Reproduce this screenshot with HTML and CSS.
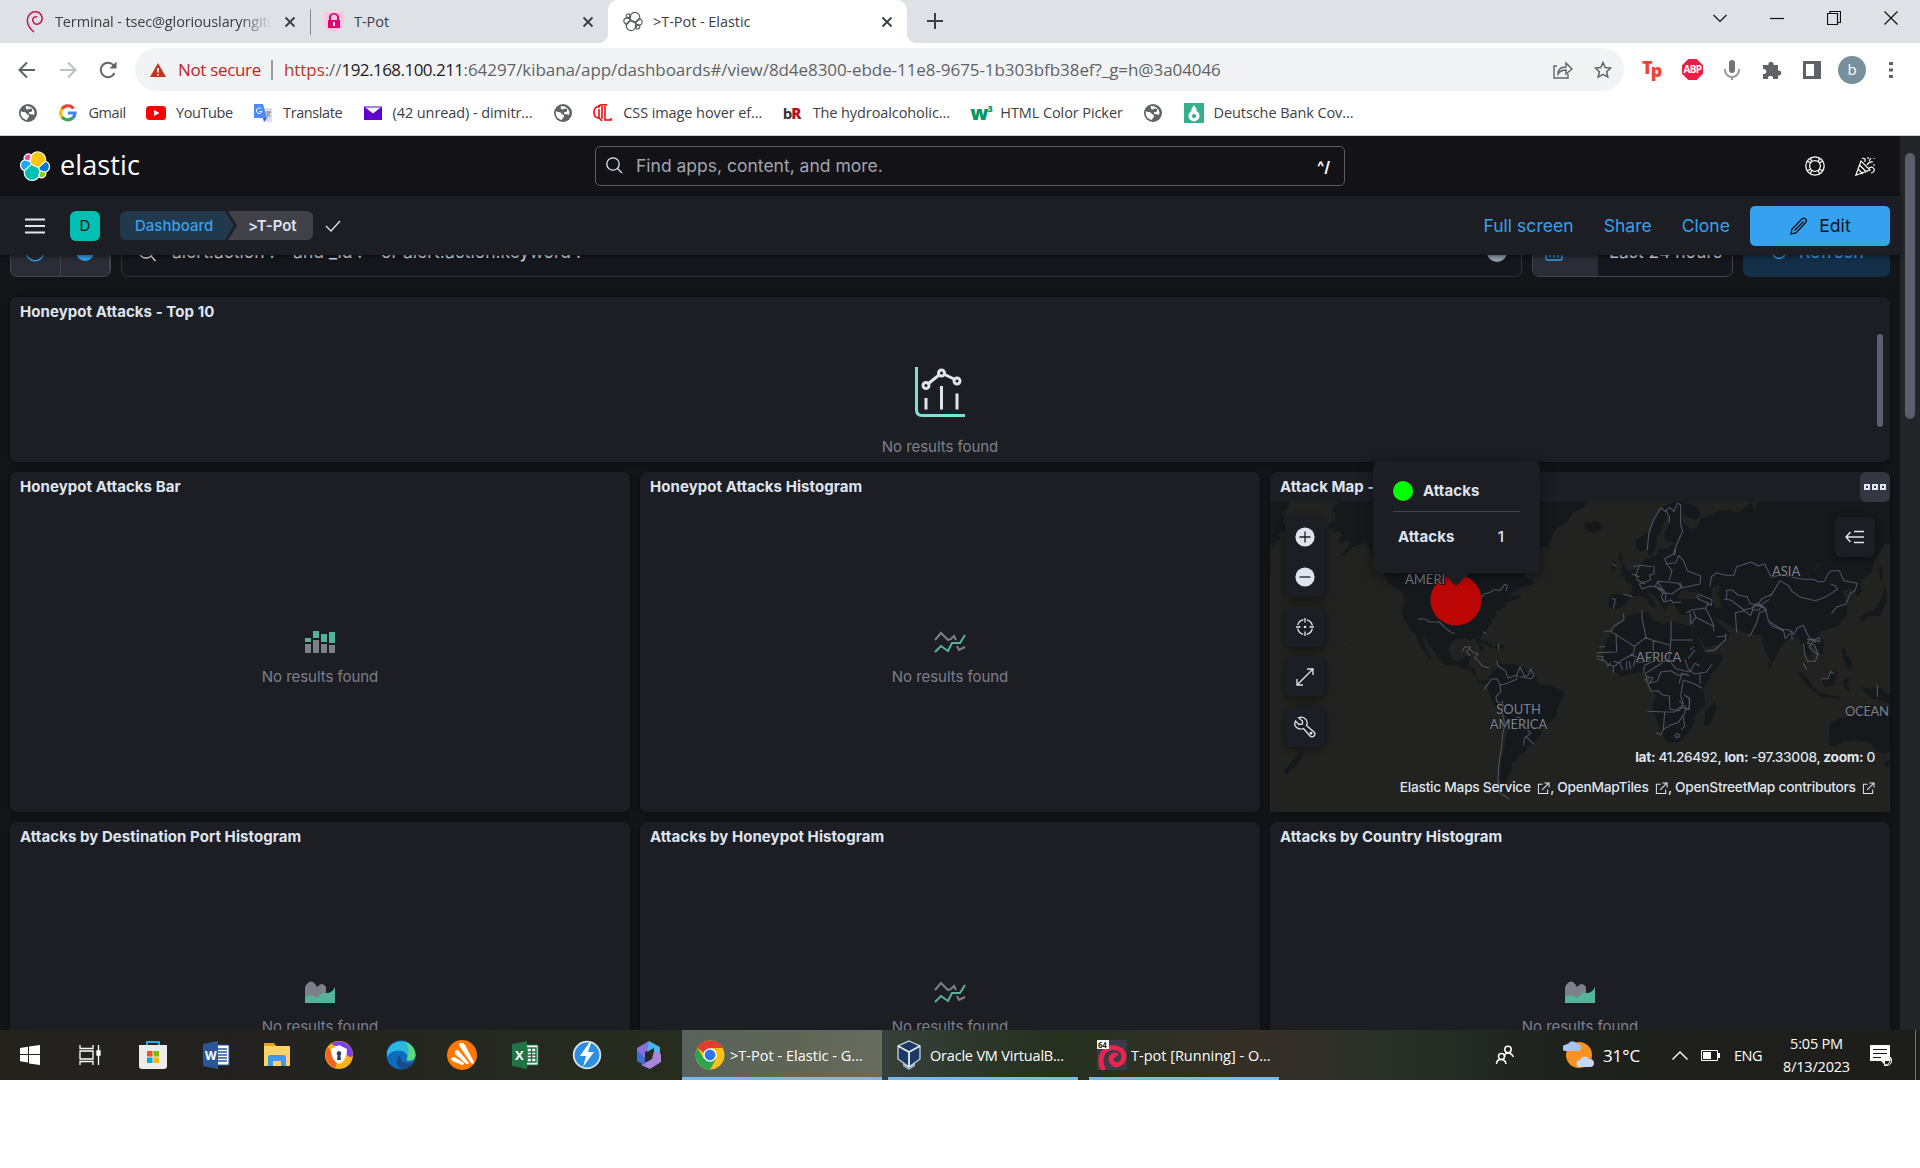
FILE: index.html
```html
<!DOCTYPE html>
<html lang="en">
<head>
<meta charset="utf-8">
<title>&gt;T-Pot - Elastic</title>
<link rel="stylesheet" href="styles.css">
</head>
<body>
<svg class="defs" width="0" height="0" aria-hidden="true">
  <defs>
    <g id="cluster">
      <path d="M12.58 13.787l7.002 3.211 7.066-6.213a7.849 7.849 0 00.152-1.557c0-4.287-3.462-7.776-7.717-7.776a7.682 7.682 0 00-6.357 3.377l-1.176 6.12 1.03 2.838z" class="c-y"/>
      <path d="M5.333 21.228A7.964 7.964 0 005.18 22.8c0 4.297 3.491 7.793 7.784 7.793a7.773 7.773 0 006.425-3.397l1.165-6.115-1.555-2.985-7.036-3.2-6.63 6.332z" class="c-t"/>
      <path d="M5.29 9.053l4.799 1.137 1.051-5.49a3.794 3.794 0 00-5.85 4.353z" class="c-p"/>
      <path d="M4.873 10.2C2.73 10.911 1.23 12.977 1.23 15.246a5.32 5.32 0 003.41 4.962l6.733-6.119-1.236-2.652-5.264-1.237z" class="c-b"/>
      <path d="M20.873 27.198a3.757 3.757 0 002.289.786c2.09 0 3.79-1.7 3.79-3.79 0-.459-.08-.903-.238-1.321l-4.794-1.122-1.047 5.447z" class="c-g"/>
      <path d="M21.848 20.563l5.28 1.235c2.143-.708 3.643-2.775 3.643-5.044a5.306 5.306 0 00-3.418-4.952l-6.905 6.053 1.4 2.708z" class="c-d"/>
    </g>
    <symbol id="globe" viewBox="0 0 20 20"><circle cx="10" cy="10" r="9" fill="#5f6368"/><path d="M3 8c2 2 4 0 5 2s3 1 3 3-2 2-2 4C4 16 2 12 3 8zM8 3c-1 3 1 4 3 3s4 0 3 2-3 0-3 2 4 1 5 2c2-4-2-9-8-9z" fill="#fff"/></symbol>
    <symbol id="close" viewBox="0 0 12 12"><path d="M1.5 1.5l9 9m0-9l-9 9" stroke="#3c4043" stroke-width="1.9"/></symbol>
    <symbol id="bars" viewBox="0 0 32 22"><path d="M1 13h6v9H1zM9 9h6v13H9zM17 13h6v9h-6zM25 14h6v8h-6z" fill="#7d7f8a"/><path d="M1 7h6v4H1zM9 0h6v7H9zM17 3h6v8h-6zM25 1h6v11h-6z" fill="#54b399"/></symbol>
    <symbol id="lines" viewBox="0 0 32 22"><path d="M1 9l6-7 7 7 3-1 3-3 2 4M23 15l2 4 6-3" fill="none" stroke="#7d7f8a" stroke-width="2"/><path d="M1 21l6-6 7 5 4-8h8l5-8" fill="none" stroke="#54b399" stroke-width="2"/></symbol>
    <symbol id="area" viewBox="0 0 30 22"><path d="M0 21V6q6-11 12 0 5-6 9 0v10L0 21z" fill="#7d7f8a"/><path d="M0 22v-6q6-4 12 1l5-5h5q5 0 8-6v16z" fill="#54b399"/></symbol>
    <symbol id="ext" viewBox="0 0 14 14"><path d="M6 2.5H1.500v10h10V8M8 1h5v5M13 1L5.500 8.500" fill="none" stroke="currentColor" stroke-width="1.100"/></symbol>
  </defs>
</svg>

<header class="tabs">
  <div class="tab tab-1">
    <svg width="20" height="24" viewBox="0 0 20 24"><path d="M9 22C4 18 1 13 3 7 6 0 15 0 17 7c1 6-5 9-8 6-3-4 0-7 3-6" fill="none" stroke="#c4174f" stroke-width="1.500"/></svg>
    <span class="tab-name faded">Terminal - tsec@gloriouslaryngiti</span>
    <svg class="x" width="12" height="12"><use href="#close"/></svg>
  </div>
  <div class="tab tab-2">
    <svg width="20" height="20" viewBox="0 0 20 20"><path d="M0 0h20v10a10 10 0 01-20 0z" fill="#f9c9df"/><path d="M5 8V5a5 4 0 0110 0v3h1v8H4V8zM7 8h6V5.500a3 3 0 00-6 0z" fill="#e20074" fill-rule="evenodd"/><path d="M9 10h2v4H9z" fill="#fff"/></svg>
    <span class="tab-name">T-Pot</span>
    <svg class="x" width="12" height="12"><use href="#close"/></svg>
  </div>
  <div class="tab tab-3">
    <svg class="outline" width="20" height="21" viewBox="0 0 32 32"><use href="#cluster"/></svg>
    <span class="tab-name">&gt;T-Pot - Elastic</span>
    <svg class="x" width="12" height="12"><use href="#close"/></svg>
  </div>
  <svg class="plus" width="16" height="16" viewBox="0 0 16 16"><path d="M8 0v16M0 8h16" stroke="#3c4043" stroke-width="2"/></svg>
  <div class="wincontrols">
    <svg width="14" height="14" viewBox="0 0 14 14"><path d="M.5 4L7 10.500 13.500 4"/></svg>
    <svg width="14" height="14" viewBox="0 0 14 14"><path d="M0 7.500h14"/></svg>
    <svg width="14" height="14" viewBox="0 0 14 14"><path d="M.5 2.500h10v11H.5zM3 2.500v-2h10.500v11h-3"/></svg>
    <svg width="14" height="14" viewBox="0 0 14 14"><path d="M.5.500l13 13m0-13l-13 13"/></svg>
  </div>
</header>

<div class="toolbar">
  <div class="nav">
    <svg width="18" height="18" viewBox="0 0 18 18"><path d="M17 9H2m7-7.500L1.500 9 9 16.500" stroke="#5f6368"/></svg>
    <svg width="18" height="18" viewBox="0 0 18 18"><path d="M1 9h15M9 1.500L16.500 9 9 16.500" stroke="#bdc1c6"/></svg>
    <svg width="18" height="18" viewBox="0 0 18 18"><path d="M15.500 12A7.200 7.200 0 1115 5" stroke="#5f6368"/><path d="M17.500.5v7h-7z" fill="#5f6368" stroke="none"/></svg>
  </div>
  <div class="omnibox">
    <svg width="16" height="14" viewBox="0 0 16 14"><path d="M8 0l8 14H0z" fill="#c5341f"/><path d="M8 5v4.500M8 11v1.500" stroke="#fff" stroke-width="1.600"/></svg>
    <span class="notsecure">Not secure</span>
    <i class="omnisep"></i>
    <span class="url"><span class="scheme">https</span>://<span class="host">192.168.100.211</span>:64297/kibana/app/dashboards#/view/8d4e8300-ebde-11e8-9675-1b303bfb38ef?_g=h@3a04046</span>
    <svg class="share" width="20" height="18" viewBox="0 0 20 18"><path d="M4 5H1v12h14v-4M5 13c0-5 3-7 8-7V2l6 6-6 5V9c-4 0-6 1-8 4z" fill="none" stroke="#5f6368" stroke-width="1.400"/></svg>
    <svg width="18" height="18" viewBox="0 0 18 18"><path d="M9 1.500l2.200 5 5.400.5-4 3.700 1.200 5.400L9 13.300l-4.800 2.800 1.200-5.400-4-3.700 5.400-.5z" fill="none" stroke="#5f6368" stroke-width="1.500"/></svg>
  </div>
  <div class="exts">
    <span class="tp">T<b>p</b></span>
    <span class="abp">ABP</span>
    <svg width="20" height="20" viewBox="0 0 20 20"><rect x="7" width="6" height="13" rx="3" fill="#757575"/><path d="M3 9v1a7 7 0 0014 0V9M10 17v3" fill="none" stroke="#9a9a9a" stroke-width="2"/></svg>
    <svg width="20" height="20" viewBox="0 0 20 20"><path d="M1 5h5.500a2.600 2.600 0 115 0H16v5.500a2.600 2.600 0 110 5V19h-5a2.600 2.600 0 10-5 0H1v-5a2.600 2.600 0 100-5z" fill="#5f6368"/></svg>
    <svg width="20" height="20" viewBox="0 0 20 20"><path d="M1 1h18v18H1zM4 4v12h8V4z" fill="#5f6368" fill-rule="evenodd"/></svg>
    <span class="avatar">b</span>
    <svg width="4" height="18" viewBox="0 0 4 18"><path d="M0 1h4v3H0zM0 7.500h4v3H0zM0 14h4v3H0z" fill="#5f6368"/></svg>
  </div>
</div>

<nav class="bookmarks">
  <span class="bm"><svg width="20" height="20"><use href="#globe"/></svg></span>
  <span class="bm tight"><svg width="20" height="20" viewBox="0 0 20 20" fill="none" stroke-width="3.200"><path d="M15.500 5.500A7 7 0 004 6" stroke="#ea4335"/><path d="M4 6a7 7 0 000 8" stroke="#fbbc05"/><path d="M4 14a7 7 0 0010.500 1" stroke="#34a853"/><path d="M14.500 15.200A7 7 0 0017 10h-7" stroke="#4285f4"/></svg>Gmail</span>
  <span class="bm tight"><svg width="20" height="20" viewBox="0 0 20 20"><rect y="3" width="20" height="14" rx="3.500" fill="#f00"/><path d="M8 7l5.500 3L8 13z" fill="#fff"/></svg>YouTube</span>
  <span class="bm tight"><svg width="20" height="20" viewBox="0 0 20 20"><path d="M8 5h11v14h-8z" fill="#dcdfe3"/><path d="M1 1h9l4 14H1z" fill="#4c8bf5"/><path d="M10 15h4l-3 4z" fill="#3367d6"/><path d="M8.500 6A2.800 2.800 0 109 8.500H6.500" fill="none" stroke="#fff"/><path d="M13 9h5m-1 0l-3.500 5m0-4l4 4" fill="none" stroke="#778"/></svg>Translate</span>
  <span class="bm"><svg width="20" height="20" viewBox="0 0 20 20"><path d="M1 4h18v13H1z" fill="#6001d2"/><path d="M1 4h18l-9 7z" fill="#fff" stroke="#6001d2"/></svg>(42 unread) - dimitr...</span>
  <span class="bm"><svg width="20" height="20"><use href="#globe"/></svg></span>
  <span class="bm"><svg width="20" height="20" viewBox="0 0 20 20" fill="none" stroke="#f00000" stroke-width="1.500"><path d="M7 4Q1 3 1 9t5 6M5 3q4-2 9-1M9 3v13m3-13v14h6v-2M6 6v9l3 3"/></svg>CSS image hover ef...</span>
  <span class="bm"><span class="br">b<b>R</b></span>The hydroalcoholic...</span>
  <span class="bm"><span class="w3">w<sup>3</sup></span>HTML Color Picker</span>
  <span class="bm"><svg width="20" height="20"><use href="#globe"/></svg></span>
  <span class="bm"><svg width="20" height="20" viewBox="0 0 20 20"><path d="M0 0h20v20H0z" fill="#34b18a"/><path d="M10 2l2.500 4v2a5.500 5.500 0 11-5 0V6z" fill="#fff"/><circle cx="10" cy="13" r="2" fill="#34a37f"/></svg>Deutsche Bank Cov...</span>
</nav>

<div class="viewport">
<main class="kibana">
  <div class="global">
    <svg class="mark" width="30" height="30" viewBox="0 0 32 32"><g stroke="#fff" stroke-width="2.600"><use href="#cluster"/></g><use href="#cluster"/></svg>
    <span class="wordmark">elastic</span>
    <div class="find">
      <svg width="17" height="17" viewBox="0 0 17 17" fill="none" stroke="#dfe5ef" stroke-width="1.300"><circle cx="7" cy="7" r="6.200"/><path d="M11.500 11.500L16 16"/></svg>
      <span>Find apps, content, and more.</span><b>^/</b>
    </div>
    <svg class="help" width="20" height="20" viewBox="0 0 20 20" fill="none" stroke="#fff" stroke-width="1.250"><circle cx="10" cy="10" r="9.200"/><circle cx="10" cy="10" r="5.400"/><path d="M2.300 5.500l3.500 1.200M5.500 2.300l1.200 3.500M17.700 5.500l-3.500 1.200M14.500 2.300l-1.200 3.500M2.300 14.500l3.500-1.200M5.500 17.700l1.200-3.500M17.700 14.500l-3.500-1.200M14.500 17.700l-1.200-3.500"/></svg>
    <svg class="cheer" width="20" height="20" viewBox="0 0 20 20" fill="none" stroke="#fff" stroke-width="1.200"><path d="M6 5L.800 19.200 15 14zM4.500 9l7 7M3 13l5 5M7 2l3 1v3M12 9q2-4 6-3M14 12q4-2 5 1t-3 4M13 1v2m3-1l-2 3m5-3v1m-1 6h2"/></svg>
  </div>
  <div class="appbar">
    <svg class="menu" width="20" height="16" viewBox="0 0 20 16"><path d="M0 1.500h20M0 8h20M0 14.500h20" stroke="#dfe5ef" stroke-width="2.200"/></svg>
    <span class="space">D</span>
    <span class="crumb crumb-1">Dashboard</span><span class="crumb crumb-2">&gt;T-Pot</span>
    <svg class="check" width="16" height="12" viewBox="0 0 16 12"><path d="M1 6l5 5L15 1" fill="none" stroke="#dfe5ef" stroke-width="1.300"/></svg>
    <div class="actions"><a>Full screen</a><a>Share</a><a>Clone</a>
      <button class="edit"><svg width="18" height="18" viewBox="0 0 18 18" fill="none" stroke="#0b1118" stroke-width="1.300"><path d="M1 17l1-5L12.500 1.500q1.500-1 3 .5t.5 3L6 16zM4.500 13.500l9-9"/></svg>Edit</button>
    </div>
  </div>

  <div class="filters">
    <div class="fbtns"><span><svg width="20" height="20" viewBox="0 0 20 20"><circle cx="10" cy="10" r="8.800" fill="none" stroke="#36a2ef" stroke-width="1.300"/><path d="M10 5v8" stroke="#36a2ef"/></svg></span><span><svg width="20" height="20" viewBox="0 0 20 20"><circle cx="10" cy="10" r="9" fill="#36a2ef"/></svg></span></div>
    <div class="query"><svg width="20" height="20" viewBox="0 0 20 20" fill="none" stroke="#dfe5ef" stroke-width="1.300"><circle cx="9" cy="9" r="7"/><path d="M14 14l4.500 5"/></svg><span>alert.action :*&nbsp; and _id :*&nbsp; or alert.action.keyword :*</span><i></i></div>
    <div class="dates"><span class="cal"><svg width="18" height="18" viewBox="0 0 18 18" fill="none" stroke="#36a2ef" stroke-width="1.400"><rect x="1" y="2" width="16" height="15" rx="1.500"/><path d="M4 10h10M4 13h10" stroke-dasharray="2 2"/></svg></span><span class="when">Last 24 hours</span></div>
    <div class="refresh"><svg width="16" height="16" viewBox="0 0 16 16"><circle cx="8" cy="8" r="6.500" fill="none" stroke="#36a2ef" stroke-width="1.400"/></svg>Refresh</div>
  </div>

  <div class="grid">
    <section class="panel wide"><h2>Honeypot Attacks - Top 10</h2>
      <div class="empty big"><svg width="50" height="50" viewBox="0 0 50 50" fill="none"><path d="M1.500 0v43q0 5.500 5.500 5.500h43" stroke="#7de2d1" stroke-width="3"/><path d="M11 31v11.500M26.500 19v23.500M42 26.500v16M11 18.500L26.500 6 42 13.500" stroke="#dfe5ef" stroke-width="3"/><g fill="#1d1e24" stroke="#dfe5ef" stroke-width="3"><circle cx="11" cy="18.500" r="3"/><circle cx="26.500" cy="6" r="3"/><circle cx="42" cy="14" r="3"/></g></svg><p>No results found</p></div>
      <i class="scroll"></i>
    </section>
    <section class="panel mid"><h2>Honeypot Attacks Bar</h2><div class="empty"><svg width="32" height="22"><use href="#bars"/></svg><p>No results found</p></div></section>
    <section class="panel mid"><h2>Honeypot Attacks Histogram</h2><div class="empty"><svg width="32" height="22"><use href="#lines"/></svg><p>No results found</p></div></section>
    <section class="panel mid mapp"><h2>Attack Map -</h2>
      <span class="opts"><i></i><i></i><i></i></span>
      <div class="map">
        <svg class="world" width="620" height="310" viewBox="1270 502 620 310">
          <rect x="1270" y="502" width="620" height="310" fill="#222220"/>
          <g transform="translate(1260 450) scale(.33333)">
            <g class="land">
              <path d="M240 150l-28 30 15 10-2 22-18 10-2 10 20 4-8 12 22-4 8 12-15 18 15 8 15-10 12 6-20 26-26 26 30-18 16-18 22-8 16-8 14 10 10 30 20 20 30 60 42 30 5 18 0 20-8 15 5 25 14 20 6 15 16 10 10 25 12 20 12 20 8 14 5-6-10-22-12-20-6-22 12 4 10 20 16 22 12 14 4 14 22 12 30 0 12 8 22 4 18 18 12 22 22 6 12-8-12-8-16 6-14-14-2-24-20-4 2-20 6-12-16-2-10 12-22 2-12-10-6-18 4-22 18-16 28-2 12 8 12-8 14 14 4 20 8 10 4-12-12-26 8-12 12-14 8-18 10-4-4-12 16-14-2-12 16-6 16-10-6-10 26-8 28-10-14-6-26 4 22-16 26-14V150z"/>
              <path d="M840 150h150l-20 22-32 18-14 24-40 26-14 34-6 18-24-4zM975 215l14 6 14-8 22 8 2 16-26 12-26-10 6-8zM770 395l30-12 20 8-4 14-24 4-6-8zM30 150h58l-4 24-20 16 12 8-10 20 20 6-6 16-28 12 12 14-22 12-8 30-2 50h2V280l-14 4z"/>
              <path d="M710 628l14 14 45 2 20 6 12 14 28 16 2 24 38 2 42 16 3 14-22 32-3 32-24 22-16 8-8 28-26 26-16 2 2 18-24 12-6 16-16 6 2 20-12 18-6 32 18 22-20-4-18-34 6-60 10-50 8-60-8-30-30-24-20-42-4-26 10-28 24-22z"/>
              <path d="M112 895l6 14 14 2-22 34-30 28-12-2 26-36 22-22zM650 568l30 6 24 18-12 2-22-16-24-4zM705 586l26 0 4 10-28 2zM264 580l8 2-2 6zM42 745l4 4-2 4z"/>
            </g>
            <g class="edge"><path d="M474 507l24 1 10 8 30 0 16 16 20 16 10 1M660 445l12-12 18-6 12-8 18 2 14-18 8 4-4 16M606 605l8-14 18 0-12 14 10 12M628 596l12 12 14 2-10 14 12 10 10 14 22 6M710 632l4 16 22 14 8 22 28-10-2 14-28 12-22 6 2 20-14 14 2 14 20 10 10 14M772 672l8-22 14 30 12-6 6-18 10 22-8 8-36-6M672 718l22-30 16-2 12 20M728 752l-2 32 8 40-6 30-4 40-8 50-2 44 4 40 16 10 14 10M770 800l18 6 6 22 18 22-18 14-4 22M798 860l22 22M716 582v16M668 545l10 6"/></g>
          </g>
          <g transform="translate(1570 450) scale(.33333)">
            <g class="land">
              <path d="M315 155l-30 14-20 22-15 34-15 20-37 24-2 26 17 10 17-8 8 20 12-8 10-24-2-22 14-18 10-30 14-18 6 20-18 30 2 24 26 10-20 14-24 2-12 22-32 10-22 26-34 18-5 18 24 14-4 28-60 0-8 8 2 30 16 8 26-10 22-26 26-8 24 14 18 22 8 2-4-18-24-26 22 4 22 30 10 18 16-26 12 8 20 28 40 6 4 34-25-6-23-4-30-8-14 10-34-12-16-24-58 8-26 26-42 52-10 55 20 22 34 28 62-12 26 10-2 36 20 22-10 45 13 35 13 28 15 36 38-1 20-18 22-30 8-36 30-28-6-48 28-50 28-38 0-18-38 4-22-24-22-46 32 46 60-12 14-28-30-30-22-18 24 8 46 26 50 18 26 0 8 38 24 48 16-32 22-34 20-15 20 0 16 44 18 16 8 16-4-22-14-40 28 18 20 22 6-38-18-30 30-10 32-8 24-32 2-40-16-32 30-10 18 28 12-24-6-22 34-30 10-34 28-46 38-14V150H565l-12 36-4-30-44 30-54-6-28 16-32 10-8 26-20 6-26-24 0-20 42 16 14-16-8-22-40-14-14-4z"/>
              <path d="M148 305l10 14-6 12 18 30 8 14-30 6 8-14-6-10 8-12-12-16zM124 340l14-6 4 20-18 8zM44 215l14 6 14-8 22 8 2 16-26 12-26-10zM0 155h48l-20 24-28 10zM945 402l-8 40-22 34-30 14-18 18 12 6 14-14 40-4 18-52zM925 345l10 6 4 36-8 4zM435 755l4 20-19 52-18-2 3-40zM683 662l20 12 42 54-12-2-26-24zM732 728l28 4 50 8 0 6-48-4zM755 684l16 0 20-24 12 6-10 40-30 4zM816 594l12 4 0 18 14 12 4 34-14-8-14-34zM820 690l26-6-16 14 10 28-8-4-10-16zM868 706l22 10 40-2 30 22v26l-32-12-26-6zM780 815l54-16 22-20 16 4 12-18 24 2 6 20 18 12 12-36 16 34v106l-20 8-22-10-16-22-46-8-36 4-26 16-18-6 2-30zM945 934l14-2-2 18-12 0zM596 636l8 8 0 14-8-4z"/>
            </g>
            <g class="sea"><path d="M428 410l24-5-8 26 12 40-20 6-12-36zM322 446l8-22 20-6 10 10 16-2 26 20-36 2-22 0zM752 336l-14 24-6 2 14-24z"/></g>
            <g class="edge">
              <path d="M232 300l4-48 14-42 22-36 14 10 12-12 14 12 10-24 10 4 0 60 6 20-20 44-4 30M286 180l12 20v18M318 290l-8 22-26 14 6 16 28-4 8-22 14 16 12 30 40 16-2 24-38 8-16 4-10-14-32-4-30-2-8 14 22 20 28 4 10-8 20-12-6-14M290 342l16 20-8 30M252 346l0 26-14 4 4 14-34 12 8 14 26-8 20 4 20 12-8 16 8 16 20-6 8 8 24-2M208 350l-10 20 4 20 24 12M185 372l24 8M262 394l14 22 12 14-2 22M190 350l20-4 36 4M126 445l10 4-6 28M160 432l28 8M126 340l14 10M350 488l14-8 42-6 10-14-30-12-6-12M360 486l2 36 16-20-8-18M378 502l20 10 32 16 2 16M406 474l16 30 10 26M384 432l24 10 18 8-2 16-16-8M420 410l4-30 16-12 26 8 26 0 8-26 44-14 20 12 20-6 20 40 32-8 62 14 30 0 20 8 16-2 10-24 12-8 22 0 14 30 40 8-8 24-12 4-14 34-26 8-18 20M600 440l30-48 26 16 10 16 26 18 44 10 32-12 34-22-6-10-14-6M630 392l-24 40-30 14-12 16 22 16 10 36 40 24 20 2 16 12 10-18 18-8 8 18 10 20 20 14M470 448l0-28 16 0 20 16 26 4 8 20 28 8 30-20M462 448l20 2 40 30 24-6 14-14 14 6-6 14-22 0M500 548l-4-60 26-6 20 14 10-28 26 0 12 12-22 8-8 30-18 36-8 4M640 540l6 26 20-22 0 26M598 518l8 10 34 14M700 580l4 34 8 20 24 0 8-22-10-26-22-8 14-12 22 10 0-14-20 12-10 16 26 26M754 686l20 0 8-22 12 8M922 704v38M700 640l10 20M740 572l-30-4"/>
              <path d="M160 490l2 20-30 18-10 16-20 0M122 544l72 46-4 22-34 18-24 20M138 550l2 56-60 2M216 480l0 24 12 58-34 26M225 562l20 8 56 16 2-14V512M303 570h66M250 570l0 40-14 24-42 4M301 586l-4 44 20 26 42 10 16-26 14 8M300 624l-48 30-26 16 6 30 30-6 10-28 30-4 24 14 26-4M345 628l10 30 20 14 34-6 18-24M375 600l-20 26M360 600l12-10M390 672v30M230 680l20 4-16 20 10 20 20-2 12 12 22 4 2 40 28 4 12-22-8-22 8-48 34 12 22 12M328 700l6-30 24 8M232 784l56 2h26l16-14 28 6 0-34-16-8M284 786l-4 54-8 14-14-6M280 838l24-14 20-6 20-28 4-18-20-20M340 800l4 30-10 8M322 850l8 8-10 6-6-8zM348 738l12 10-4 30M356 780l-20-8M130 668v-20l-16-4-10-12-24-6M80 618l20 2-4 14M158 660l-8-20-20-6M170 660v-26M182 658l-4-24M190 650l6-24M200 620l-20-6M220 670l4-24 28-14M220 690l18 0M110 650l12-12M88 590l16 0M468 550l-2 20-32 30-30 4M440 560l30-2"/>
            </g>
          </g>
          <circle cx="1456" cy="600" r="25.500" fill="#bd0606"/>
          <g class="names"><text x="1405" y="584">AMERI</text><text x="1518.500" y="713.500" text-anchor="middle">SOUTH</text><text x="1518.500" y="728.500" text-anchor="middle">AMERICA</text><text x="1772" y="576">ASIA</text><text x="1636" y="662">AFRICA</text><text x="1845" y="715.500" textLength="44">OCEAN</text></g>
        </svg>
        <div class="tools">
          <div class="zoom"><svg width="20" height="20" viewBox="0 0 20 20"><circle cx="10" cy="10" r="9.600" fill="#dfe5ef"/><path d="M10 4.500v11M4.500 10h11" stroke="#1d1e24" stroke-width="1.300"/></svg><svg width="20" height="20" viewBox="0 0 20 20"><circle cx="10" cy="10" r="9.600" fill="#dfe5ef"/><path d="M4.500 10h11" stroke="#1d1e24" stroke-width="1.300"/></svg></div>
          <div><svg width="20" height="20" viewBox="0 0 20 20"><circle cx="10" cy="10" r="7.500" stroke-dasharray="8.200 3.580" stroke-dashoffset="-1.800"/><path d="M10 1v4.500M10 14.500V19M1 10h4.500M14.500 10H19"/><circle cx="10" cy="10" r="1.300" fill="#dfe5ef" stroke="none"/></svg></div>
          <div><svg width="20" height="20" viewBox="0 0 20 20"><path d="M2 18L18 2M12 2h6v6M2 12v6h6"/></svg></div>
          <div><svg width="22" height="22" viewBox="0 0 22 22"><path d="M4.500 1.800Q9 0 12 3.500q2 3 .5 6l7.500 6.500a2.800 2.800 0 01-4 4l-6.500-7.500q-4 1.500-7-1T1.500 5L5 8.500 8.500 8 8.500 5z"/><circle cx="17" cy="17.200" r=".8"/></svg></div>
        </div>
        <div class="legend"><svg width="20" height="14" viewBox="0 0 20 14" fill="none" stroke="#dfe5ef" stroke-width="1.400"><path d="M1 7h18M9 1.500h10M9 12.500h10M5.500 2L1 7l4.500 5"/></svg></div>
        <p class="coords"><b>lat:</b> 41.26492, <b>lon:</b> -97.33008, <b>zoom:</b> 0</p>
        <p class="credits">Elastic Maps Service <svg width="13" height="13"><use href="#ext"/></svg>, OpenMapTiles <svg width="13" height="13"><use href="#ext"/></svg>, OpenStreetMap contributors <svg width="13" height="13"><use href="#ext"/></svg></p>
      </div>
      <div class="tip"><div class="tip-head"><i></i>Attacks</div><div class="tip-row"><span>Attacks</span><span>1</span></div></div>
    </section>
    <section class="panel low"><h2>Attacks by Destination Port Histogram</h2><div class="empty"><svg width="30" height="22"><use href="#area"/></svg><p>No results found</p></div></section>
    <section class="panel low"><h2>Attacks by Honeypot Histogram</h2><div class="empty"><svg width="32" height="22"><use href="#lines"/></svg><p>No results found</p></div></section>
    <section class="panel low"><h2>Attacks by Country Histogram</h2><div class="empty"><svg width="30" height="22"><use href="#area"/></svg><p>No results found</p></div></section>
  </div>
</main>
<div class="track"><i></i></div>
</div>

<footer class="taskbar">
  <div class="pins">
    <svg width="22" height="22" viewBox="0 0 22 22"><path d="M1 4l8-1.200V10H1zM10 2.600L21 1v9H10zM1 11h8v7.500L1 17.300zM10 11h11v10l-11-1.600z" fill="#fff"/></svg>
    <svg width="22" height="22" viewBox="0 0 22 22" fill="none" stroke="#fff" stroke-width="1.300"><path d="M1 1v3.500h13V1M1 21v-3.500h13V21M1 7h13v8H1zM19.500 1v20"/><path d="M18 7h3v4h-3z" fill="#fff"/></svg>
    <svg width="30" height="30" viewBox="0 0 30 30"><path d="M9 6V2h12v4" fill="none" stroke="#29a9e8" stroke-width="2"/><path d="M1 5h28v21q0 3-3 3H4q-3 0-3-3z" fill="#ececec"/><path d="M9 11h5.500v5.500H9z" fill="#f25022"/><path d="M15.500 11H21v5.500h-5.500z" fill="#7fba00"/><path d="M9 17.500h5.500V23H9z" fill="#00a4ef"/><path d="M15.500 17.500H21V23h-5.500z" fill="#ffb900"/></svg>
    <svg width="30" height="30" viewBox="0 0 30 30"><path d="M14 5h14v20H14z" fill="#fff" stroke="#2b579a"/><path d="M17 9h9M17 12h9M17 15h9M17 18h9M17 21h9" stroke="#2b579a" stroke-width="1.500"/><path d="M2 4l15-3v28L2 26z" fill="#2b579a"/><text x="4" y="19.500" fill="#fff" font-size="12" font-weight="700">W</text></svg>
    <svg width="30" height="30" viewBox="0 0 30 30"><path d="M2 3h10l3 4h-13z" fill="#e3a21a"/><path d="M2 6h26v20H2z" fill="#fdd367"/><path d="M6 26v-9q0-2 2-2h14q2 0 2 2v9h-5v-5h-8v5z" fill="#3e9bdc"/></svg>
    <svg width="30" height="30" viewBox="0 0 30 30"><circle cx="15" cy="15" r="14" fill="#fbb216"/><path d="M7 4a14 14 0 0122 11q-2 4-6 0L15 7z" fill="#7b3ff2"/><path d="M4 7a14 14 0 007 21l2-6L7 12z" fill="#f26322"/><path d="M15 5l8 4q0 12-8 15-8-3-8-15z" fill="#fff"/><path d="M15 11a2.400 2.400 0 011.400 4.300L17 20h-4l.6-4.700A2.400 2.400 0 0115 11z" fill="#333a5a"/></svg>
    <svg width="30" height="30" viewBox="0 0 30 30"><circle cx="15" cy="15" r="14.500" fill="#0c6cbd"/><path d="M1 12A14.500 14.500 0 0129.500 15c0 4-4 7-9 5 2-4 0-8-5-9S4 11 1 17z" fill="#2bb7df"/><path d="M19 2a14 14 0 0110.500 13c0 4-4 7-9 5 3-6 3-13-1.500-18z" fill="#5bdc79"/><path d="M14 15c0 7 6 10 13 7-2 4-6 7-12 7-5-3-6-11-1-14z" fill="#1b4a8a"/></svg>
    <svg width="30" height="30" viewBox="0 0 30 30"><circle cx="15" cy="15" r="15" fill="#ff7800"/><path d="M13 3q3-1 5 2l9 17q0 3-3 1L13 7q-2-3 0-4zM8 11q2-2 4 0l10 12q-1 2-4 0L8 14zM4 18q3-2 5 0l8 5q0 2-2 2l-10-4z" fill="#fff"/></svg>
    <svg width="30" height="30" viewBox="0 0 30 30"><path d="M14 5h14v20H14z" fill="#fff" stroke="#217346"/><path d="M17 8h9v14h-9zM21.500 8v14M17 12h9M17 15h9M17 18h9" fill="none" stroke="#217346" stroke-width="1.500"/><path d="M2 4l15-3v28L2 26z" fill="#217346"/><text x="5" y="20" fill="#fff" font-size="13" font-weight="700">X</text></svg>
    <svg width="30" height="30" viewBox="0 0 30 30"><circle cx="15" cy="15" r="13.300" fill="#2c8fe0" stroke="#d7e3ee" stroke-width="1.800"/><path d="M17 3L8 16h6l-3 11 11-15h-6l3-9z" fill="#fff"/></svg>
    <svg width="30" height="30" viewBox="0 0 30 30"><path d="M15 1L3 8v13l8 4V12l9-5z" fill="#8a6fe0"/><path d="M15 1l11 6v10l-6-4V8l-7 4z" fill="#48b6e8"/><path d="M27 14v8l-11 7-9-4 11-6 2-8z" fill="#a985dc"/><path d="M3 10v11l8 4v-7z" fill="#3d6fd0"/></svg>
  </div>
  <div class="task active"><svg width="30" height="30" viewBox="0 0 30 30"><circle cx="15" cy="15" r="14.500" fill="#fbc116"/><path d="M2.400 8A14.500 14.500 0 0127.800 8H15v9z" fill="#e33b2e"/><path d="M2.400 8A14.500 14.500 0 0015 29.500L21 19l-12 0z" fill="#2da44e"/><circle cx="15" cy="15" r="6.800" fill="#fff"/><circle cx="15" cy="15" r="5.400" fill="#2b76e8"/></svg><span>&gt;T-Pot - Elastic - G...</span></div>
  <div class="task vb"><svg width="30" height="30" viewBox="0 0 30 30"><path d="M9 21h12v5l-6 4-6-4z" fill="#9fb0c6"/><path d="M15 1l11 5v13l-11 8L4 19V6z" fill="#1c3a63" stroke="#c9d6e6" stroke-width="1.300"/><path d="M4 6l11 6 11-6M15 12v15" fill="none" stroke="#e7eef6" stroke-width="1.800"/></svg><span>Oracle VM VirtualB...</span></div>
  <div class="task tpot"><svg width="30" height="30" viewBox="0 0 30 30"><path d="M0 0h30v30H0z" fill="#383b48"/><path d="M7 30Q2 23 5 15C9 5 25 5 27 16c0 9-11 12-13 4 0-5 4-6 6-4" fill="none" stroke="#f0234f" stroke-width="5"/><path d="M0 0h12v9H0z" fill="#fff"/><text x="1" y="7.500" font-size="8" font-weight="700" fill="#222">64</text></svg><span>T-pot [Running] - O...</span></div>
  <div class="tray">
    <svg class="people" width="20" height="20" viewBox="0 0 20 20" fill="none" stroke="#fff" stroke-width="1.500"><circle cx="13" cy="4.500" r="3.200"/><path d="M9.500 12q0-4 3.500-4t5.500 4"/><circle cx="6.500" cy="11.500" r="3"/><path d="M1.500 19q0-4.500 4.500-4.500t5 4.500"/></svg>
    <svg class="weather" width="32" height="30" viewBox="0 0 32 30"><circle cx="16" cy="15" r="13" fill="#f7931e"/><path d="M3 11a3 3 0 01-1-6q1-1 3-1a5 5 0 019 0q4 0 4 3.500T14 11z" fill="#a9c3f2"/><path d="M17 27a3.500 3.500 0 010-7 5 5 0 019-1q5 0 5 4t-4 4z" fill="#c5d7f7"/></svg>
    <span class="temp">31°C</span>
    <svg class="up" width="16" height="9" viewBox="0 0 16 9"><path d="M.5 8.500L8 1l7.500 7.500" fill="none" stroke="#fff" stroke-width="1.400"/></svg>
    <svg class="batt" width="19" height="11" viewBox="0 0 19 11"><path d="M.5.500h16v10H.5z" fill="none" stroke="#fff"/><path d="M2 2h8v7H2zM17 3h2v5h-2z" fill="#fff"/></svg>
    <span class="lang">ENG</span>
    <span class="clock">5:05 PM<br>8/13/2023</span>
    <svg class="note" width="22" height="21" viewBox="0 0 22 21"><path d="M0 0h20v16h-5v4l-4-4H0z" fill="#fff"/><path d="M3 4.500h14M3 8.500h14M3 12.500h8" stroke="#1d1d1a"/><path d="M14 20a5 5 0 005-9 5.500 5.500 0 01-5 9z" fill="#1d1d1a" stroke="#fff"/></svg>
    <i class="peek"></i>
  </div>
</footer>
</body>
</html>
```
FILE: styles.css
```css
* { box-sizing: border-box; }
body { margin: 0; width: 1920px; height: 1168px; overflow: hidden; background: #fff; font-family: "Open Sans", "Noto Sans", sans-serif; }
svg { flex: none; display: block; }
p, h2 { margin: 0; }
.defs { position: absolute; }
.c-y { fill: var(--mark, #fec514); } .c-t { fill: var(--mark, #00bfb3); } .c-p { fill: var(--mark, #f04e98); }
.c-b { fill: var(--mark, #1ba9f5); } .c-g { fill: var(--mark, #93c90e); } .c-d { fill: var(--mark, #0077cc); }
.outline { --mark: #fff; stroke: #55585c; stroke-width: 1.8; }

/* tab strip */
.tabs { display: flex; height: 43px; background: #dee1e6; font-size: 14.500px; color: #3c4043; }
.tab { display: flex; align-items: center; height: 43px; white-space: nowrap; }
.tab-name { margin-left: 10px; flex: 1; overflow: hidden; letter-spacing: -.05px; line-height: 24px; }
.tab-1 { width: 311px; padding: 0 15px 0 25px; position: relative; }
.tab-1::after { content: ""; position: absolute; right: 0; top: 9px; width: 1.500px; height: 26px; background: #85888d; }
.faded { margin-right: 12px; letter-spacing: -.14px; -webkit-mask-image: linear-gradient(90deg, #000 85%, transparent 100%); mask-image: linear-gradient(90deg, #000 85%, transparent 100%); }
.tab-2 { width: 297px; padding: 0 14px 0 13px; }
.tab-3 { width: 299px; padding: 0 14px 0 15px; background: #fff; border-radius: 10px 10px 0 0; position: relative; }
.tab-3::before, .tab-3::after { content: ""; position: absolute; bottom: 0; width: 10px; height: 10px; }
.tab-3::before { left: -10px; background: radial-gradient(circle at 0 0, transparent 10px, #fff 10.500px); }
.tab-3::after { right: -10px; background: radial-gradient(circle at 100% 0, transparent 10px, #fff 10.500px); }
.plus { margin: 13px 0 0 20px; }
.wincontrols { margin-left: auto; display: flex; gap: 43px; padding: 11px 22px 0 0; fill: none; stroke: #111; stroke-width: 1.200; }

/* address bar */
.toolbar { display: flex; align-items: center; height: 48px; padding-top: 5px; }
.nav { display: flex; gap: 22.500px; width: 135px; padding-left: 18px; fill: none; stroke-width: 2; }
.omnibox { display: flex; align-items: center; width: 1489px; height: 43px; border-radius: 22px; background: #f1f3f4; font-size: 17px; color: #5f6368; padding: 0 12px 0 15px; white-space: nowrap; line-height: 26px; }
.notsecure { color: #c5221f; margin-left: 12px; letter-spacing: -.330px; width: 83px; }
.omnisep { width: 2px; height: 20px; margin: 0 11px 0 10px; background: #9a9da1; }
.url { letter-spacing: -.070px; }
.scheme { color: #c5341f; }
.host { color: #202124; letter-spacing: -.530px; }
.share { margin: 0 21px 0 auto; }
.exts { display: flex; align-items: center; gap: 20px; flex: 1; padding-left: 18px; }
.tp { width: 20px; font: 800 18px/22px "Open Sans", sans-serif; color: #f44336; letter-spacing: -2px; margin-top: -5px; }
.tp b { position: relative; top: 3px; }
.abp { width: 21px; height: 21px; margin-right: -1px; background: #ed1e45; clip-path: polygon(30% 0, 70% 0, 100% 30%, 100% 70%, 70% 100%, 30% 100%, 0 70%, 0 30%); color: #fff; font: 700 10px/21px "Open Sans", sans-serif; text-align: center; letter-spacing: -.6px; }
.avatar { width: 28px; height: 28px; margin: 0 -1px 0 -4px; border-radius: 50%; background: #78909c; color: #fff; font-size: 15px; line-height: 27px; text-align: center; }
.exts svg:last-child { margin-left: 4px; }

.bookmarks { display: flex; align-items: center; gap: 20.400px; height: 45px; padding: 0 18px 1px; border-bottom: 1px solid #d0d3d8; font-size: 14.500px; letter-spacing: -.090px; color: #3c4043; white-space: nowrap; }
.bm { display: flex; align-items: center; gap: 10px; }
.tight { letter-spacing: -.420px; }
.br { width: 20px; font-weight: 700; font-size: 15px; letter-spacing: -1px; color: #333; }
.br b { color: #b3122c; }
.w3 { width: 20px; font-weight: 800; font-size: 20px; line-height: 20px; color: #059862; letter-spacing: -1px; white-space: nowrap; }
.w3 sup { font-size: 9px; line-height: 0; vertical-align: 8px; }

/* kibana */
.viewport { display: flex; height: 894px; overflow: hidden; font-family: Inter, sans-serif; color: #dfe5ef; }
.kibana { width: 1900px; background: #141519; }
.track { width: 20px; background: #242529; padding: 17px 5px 0; }
.track i { display: block; width: 10px; height: 266px; border-radius: 5px; background: #5c5f6b; }
.global { display: flex; align-items: center; height: 60px; padding: 0 25px 0 20px; background: #121217; position: relative; z-index: 2; }
.wordmark { width: 545px; padding-left: 10px; font: 400 27px/34px "Open Sans", sans-serif; letter-spacing: .1px; color: #fff; height: 37px; }
.find { display: flex; align-items: center; width: 750px; height: 40px; border: 1px solid #5a5c66; border-radius: 5px; padding: 0 14px 2px 10px; font-size: 17.500px; color: #a2a5ae; }
.find span { margin-left: 13px; flex: 1; }
.find b { font-size: 15px; color: #fff; padding-top: 2px; }
.help { margin-left: auto; }
.cheer { margin-left: 30px; }
.appbar { display: flex; align-items: center; height: 59px; padding: 0 10px 0 25px; background: #1d1e24; position: relative; z-index: 2; box-shadow: 0 1px 5px rgba(0,0,0,.6); }
.space { width: 30px; height: 30px; margin: 0 20px 0 25px; border-radius: 6px; background: #00bfb3; color: #111; font-size: 15px; line-height: 30px; text-align: center; }
.crumb { height: 29px; line-height: 29px; font-size: 15px; }
.crumb-1 { width: 114px; padding-left: 15px; font-weight: 500; color: #36a2ef; background: #22384d; border-radius: 6px 0 0 6px; clip-path: polygon(0 0, 105px 0, 100% 50%, 105px 100%, 0 100%); }
.crumb-2 { width: 85px; margin-left: -6px; padding-left: 20px; font-weight: 600; letter-spacing: -.05px; background: #404149; border-radius: 0 6px 6px 0; clip-path: polygon(0 0, 100% 0, 100% 100%, 0 100%, 9px 50%); }
.check { margin-left: 12px; }
.actions { display: flex; align-items: center; margin-left: auto; gap: 30px; font-size: 17.500px; letter-spacing: .04px; color: #36a2ef; }
.edit { display: flex; align-items: center; justify-content: center; gap: 11px; width: 140px; height: 40px; margin-left: -10px; padding: 0 0 0 1px; border: 0; border-radius: 5px; background: #36a2ef; color: #0b1118; font: 400 17.500px Inter, sans-serif; letter-spacing: .1px; }
.filters { display: flex; height: 50px; margin: -28px 10px 20px; font-size: 17.500px; }
.fbtns { display: flex; width: 101px; border: 1px solid #42444f; border-radius: 7px; background: #2b2d36; overflow: hidden; }
.fbtns span { width: 50px; padding: 14px 0 0 14px; border-right: 1px solid #42444f; }
.query { display: flex; align-items: center; width: 1401px; margin-left: 10px; border: 1px solid #30323b; border-radius: 7px; background: #16171c; padding: 0 14px 0 15px; }
.query span { margin-left: 15px; flex: 1; padding-bottom: 1px; }
.query i { width: 20px; height: 20px; border-radius: 50%; background: #98a2b3; }
.dates { display: flex; width: 201px; margin-left: 10px; border: 1px solid #42444f; border-radius: 7px; background: #16171c; overflow: hidden; line-height: 47px; }
.cal { width: 65px; background: #2b2d36; padding: 15px 0 0 12px; }
.when { padding-left: 11px; white-space: nowrap; }
.refresh { display: flex; align-items: center; gap: 12px; margin-left: 10px; width: 147px; padding: 0 0 1px 28px; border-radius: 7px; background: #133048; color: #36a2ef; font-weight: 500; }

.grid { display: grid; grid-template-columns: repeat(3, 620px); grid-template-rows: 165px 340px 340px; gap: 10px; margin: 0 10px; }
.panel { position: relative; background: #1d1e24; border-radius: 7px; box-shadow: 0 1px 6px rgba(0,0,0,.5); }
.wide { grid-column: 1 / 4; }
.panel h2 { height: 30px; padding-left: 10px; font-size: 15px; font-weight: 700; line-height: 30px; letter-spacing: .06px; }
.empty { height: 310px; display: flex; flex-direction: column; align-items: center; justify-content: center; gap: 13px; font-size: 15px; line-height: 22px; color: #7d7f8a; letter-spacing: -.05px; }
.mid .empty, .low .empty { padding-top: 4px; }
.wide .empty { height: auto; padding: 40px 20px 0 0; gap: 19px; }
.scroll { position: absolute; right: 7px; top: 37px; width: 6px; height: 93px; border-radius: 3px; background: #5c5f6b; }
.opts { position: absolute; right: 0; top: 0; display: flex; align-items: center; justify-content: center; gap: 2px; width: 30px; height: 30px; background: #343741; border-radius: 6px; }
.opts i { width: 6px; height: 6px; border: 2px solid #dfe5ef; }

/* map */
.map { position: relative; height: 310px; }
.land { fill: #16191c; }
.sea { fill: #222220; }
.edge { fill: none; stroke: #505464; stroke-width: 3.200; stroke-linejoin: round; }
.names { font: 400 13px Lato, "Open Sans", sans-serif; fill: #7b818c; stroke: #14171a; stroke-width: 1.500px; paint-order: stroke; }
.tools { position: absolute; left: 15px; top: 15px; display: flex; flex-direction: column; gap: 10px; }
.tools div, .legend { display: flex; flex-direction: column; align-items: center; justify-content: center; width: 40px; height: 40px; border-radius: 6px; background: #1d1e24; box-shadow: 0 2px 8px rgba(0,0,0,.45); }
.tools svg { fill: none; stroke: #dfe5ef; stroke-width: 1.300; }
.zoom circle { stroke: none; }
.tools .zoom { height: 80px; gap: 20px; }
.legend { position: absolute; right: 15px; top: 15px; }
.coords, .credits { position: absolute; right: 15px; line-height: 20px; white-space: nowrap; font-size: 13.750px; font-weight: 500; }
.coords { top: 245px; letter-spacing: -.36px; }
.credits { top: 275px; letter-spacing: -.28px; }
.credits svg { display: inline-block; vertical-align: -2.500px; margin-left: 3px; }
.tip { position: absolute; left: 103px; top: -11px; width: 167px; height: 112px; border-radius: 7px; background: #1d1e24; padding: 15px 20px; font-size: 15px; font-weight: 700; letter-spacing: .06px; box-shadow: 0 3px 14px rgba(0,0,0,.5); }
.tip::after { content: ""; position: absolute; left: 69px; top: 111px; border: 14px solid transparent; border-top-color: #1d1e24; border-bottom: 0; }
.tip-head { display: flex; align-items: center; height: 36px; padding-bottom: 6px; border-bottom: 1px solid #40424c; }
.tip-head i { width: 20px; height: 20px; margin-right: 10px; border-radius: 50%; background: #0f0; }
.tip-row { display: flex; justify-content: space-between; padding: 14px 16px 0 5px; line-height: 22px; }
.tip-row span:last-child { font-weight: 500; }

/* taskbar */
.taskbar { display: flex; height: 50px; color: #fff; font-size: 14.500px; letter-spacing: -.100px; background: linear-gradient(90deg, #24231e 0, #23211f 12%, #252820 25%, #262c1e 36%, #38433e 43%, #36403a 46%, #25301f 55%, #2c3022 59%, #362f29 66%, #263027 73%, #1f211d 81%, #1d1d1a 100%); }
.pins { display: grid; grid-template-columns: 60px 60px 65px 61px 62px 62px 61px 62px 63px 61px 63px; width: 682px; align-items: center; justify-items: center; }
.task { display: flex; align-items: center; height: 50px; border-bottom: 3px solid #76b9ed; white-space: nowrap; }
.task svg { margin-top: 2px; }
.task span { padding-top: 3px; }
.pins text, .task text { font-family: "Open Sans", sans-serif; letter-spacing: -.3px; }
.active { width: 200px; padding-left: 13px; gap: 5px; background: linear-gradient(90deg, #59625c, #606656 60%, #676b60); }
.active span { letter-spacing: .02px; }
.vb { width: 190px; margin-left: 6px; padding-left: 6px; gap: 6px; letter-spacing: -.2px; }
.tpot { width: 190px; margin-left: 11px; padding-left: 8px; gap: 4px; letter-spacing: 0; }
.tray { display: flex; align-items: center; flex: 1; }
.people { margin-left: 216px; }
.weather { margin-left: 48px; }
.temp { width: 77px; padding-left: 8px; font-size: 17px; }
.batt { margin-left: 13px; }
.lang { width: 40px; padding-left: 14px; letter-spacing: -.5px; }
.clock { width: 110px; padding-left: 3px; text-align: center; line-height: 23px; letter-spacing: -.2px; font-size: 14.500px; }
.peek { width: 1px; height: 50px; margin-left: 23px; background: #73736f; }
```
